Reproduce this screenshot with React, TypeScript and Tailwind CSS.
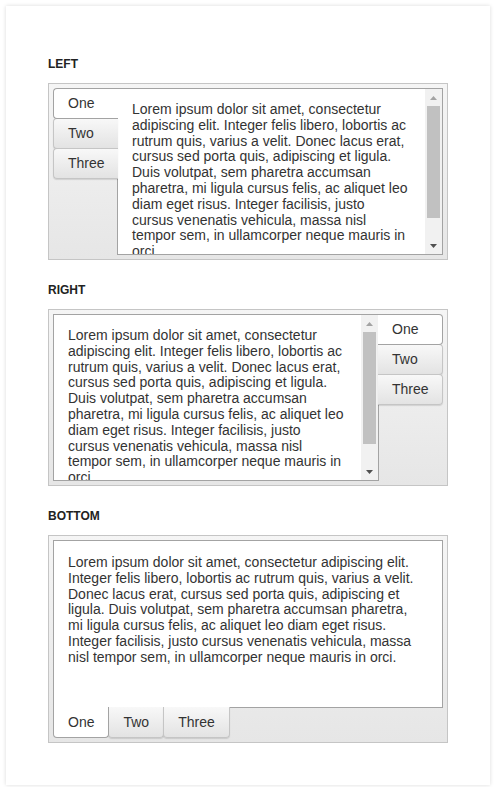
import React from "react";

const LOREM =
  "Lorem ipsum dolor sit amet, consectetur adipiscing elit. Integer felis libero, lobortis ac rutrum quis, varius a velit. Donec lacus erat, cursus sed porta quis, adipiscing et ligula. Duis volutpat, sem pharetra accumsan pharetra, mi ligula cursus felis, ac aliquet leo diam eget risus. Integer facilisis, justo cursus venenatis vehicula, massa nisl tempor sem, in ullamcorper neque mauris in orci.";

const TABS = ["One", "Two", "Three"];

const Arrow: React.FC<{ down?: boolean; color: string }> = ({ down, color }) => (
  <svg width="7" height="4" viewBox="0 0 7 4">
    <polygon points={down ? "0,0 7,0 3.5,4" : "0,4 7,4 3.5,0"} fill={color} />
  </svg>
);

const Scrollbar: React.FC = () => (
  <div className="w-[17px] shrink-0 bg-[#f1f1f1] flex flex-col">
    <div className="h-[17px] flex items-center justify-center">
      <Arrow color="#a3a3a3" />
    </div>
    <div className="flex-1 px-[2px]">
      <div className="h-[112px] bg-[#c1c1c1]" />
    </div>
    <div className="h-[17px] flex items-center justify-center">
      <Arrow down color="#505050" />
    </div>
  </div>
);

const Title: React.FC<{ children: React.ReactNode }> = ({ children }) => (
  <div className="h-[16px] leading-[16px] text-[12px] font-bold text-[#222] mb-[11px]">
    {children}
  </div>
);

const Content: React.FC = () => (
  <div className="flex-1 min-w-0 overflow-hidden pl-[14px] pr-[17px] pt-[13px] text-[14px] leading-[15.8px] text-[#333]">
    {LOREM}
  </div>
);

const VerticalTabs: React.FC<{ side: "left" | "right" }> = ({ side }) => (
  <div className="w-[65px] shrink-0 flex flex-col">
    {TABS.map((t, i) => {
      const active = i === 0;
      const base =
        "h-[31px] flex items-center px-[14px] text-[14px] text-[#333] border relative";
      const shape =
        side === "left"
          ? "rounded-l-[4px] border-r-0"
          : "rounded-r-[4px] border-l-0";
      const look = active
        ? "bg-white border-[#a3a3a3] z-10"
        : "bg-linear-to-b from-[#f8f8f8] to-[#e3e3e3] border-[#c5c5c5] shadow-[0_1px_1px_rgba(0,0,0,0.12)]";
      return (
        <div key={t} className={`${base} ${shape} ${look} ${i > 0 ? "-mt-px" : ""}`}>
          {t}
        </div>
      );
    })}
  </div>
);

const LeftBox: React.FC = () => (
  <div className="border border-[#c5c5c5] bg-linear-to-b from-[#f5f5f5] to-[#e6e6e6] p-[4px] flex">
    <VerticalTabs side="left" />
    <div className="h-[167px] flex-1 -ml-px border border-[#a3a3a3] bg-white flex">
      <Content />
      <Scrollbar />
    </div>
  </div>
);

const RightBox: React.FC = () => (
  <div className="border border-[#c5c5c5] bg-linear-to-b from-[#f5f5f5] to-[#e6e6e6] p-[4px] flex">
    <div className="h-[167px] flex-1 -mr-px border border-[#a3a3a3] bg-white flex">
      <Content />
      <Scrollbar />
    </div>
    <VerticalTabs side="right" />
  </div>
);

const BottomBox: React.FC = () => (
  <div className="border border-[#c5c5c5] bg-linear-to-b from-[#f5f5f5] to-[#e6e6e6] p-[4px] flex flex-col">
    <div className="h-[168px] border border-[#a3a3a3] bg-white flex">
      <div className="flex-1 pl-[14px] pr-[20px] pt-[14px] text-[14px] leading-[15.8px] text-[#333]">
        {LOREM}
      </div>
    </div>
    <div className="flex -mt-px">
      {TABS.map((t, i) => {
        const active = i === 0;
        return (
          <div
            key={t}
            className={`h-[31px] flex items-center px-[14px] text-[14px] text-[#333] border border-t-0 rounded-b-[4px] relative ${
              i > 0 ? "-ml-px" : ""
            } ${
              active
                ? "bg-white border-[#a3a3a3] z-10"
                : "bg-linear-to-b from-[#f8f8f8] to-[#e3e3e3] border-[#c5c5c5] shadow-[0_1px_1px_rgba(0,0,0,0.12)]"
            }`}
          >
            {t}
          </div>
        );
      })}
    </div>
  </div>
);

export default function App() {
  return (
    <div className="w-full min-h-screen bg-white pt-[6px] pl-[6px] font-['Liberation_Sans',Arial,sans-serif]">
      <div className="w-[484px] bg-white shadow-[0_0_4px_rgba(0,0,0,0.15)] pt-[50px] pb-[42px] px-[42px]">
        <Title>LEFT</Title>
        <LeftBox />
        <div className="h-[22px]" />
        <Title>RIGHT</Title>
        <RightBox />
        <div className="h-[22px]" />
        <Title>BOTTOM</Title>
        <BottomBox />
      </div>
    </div>
  );
}
